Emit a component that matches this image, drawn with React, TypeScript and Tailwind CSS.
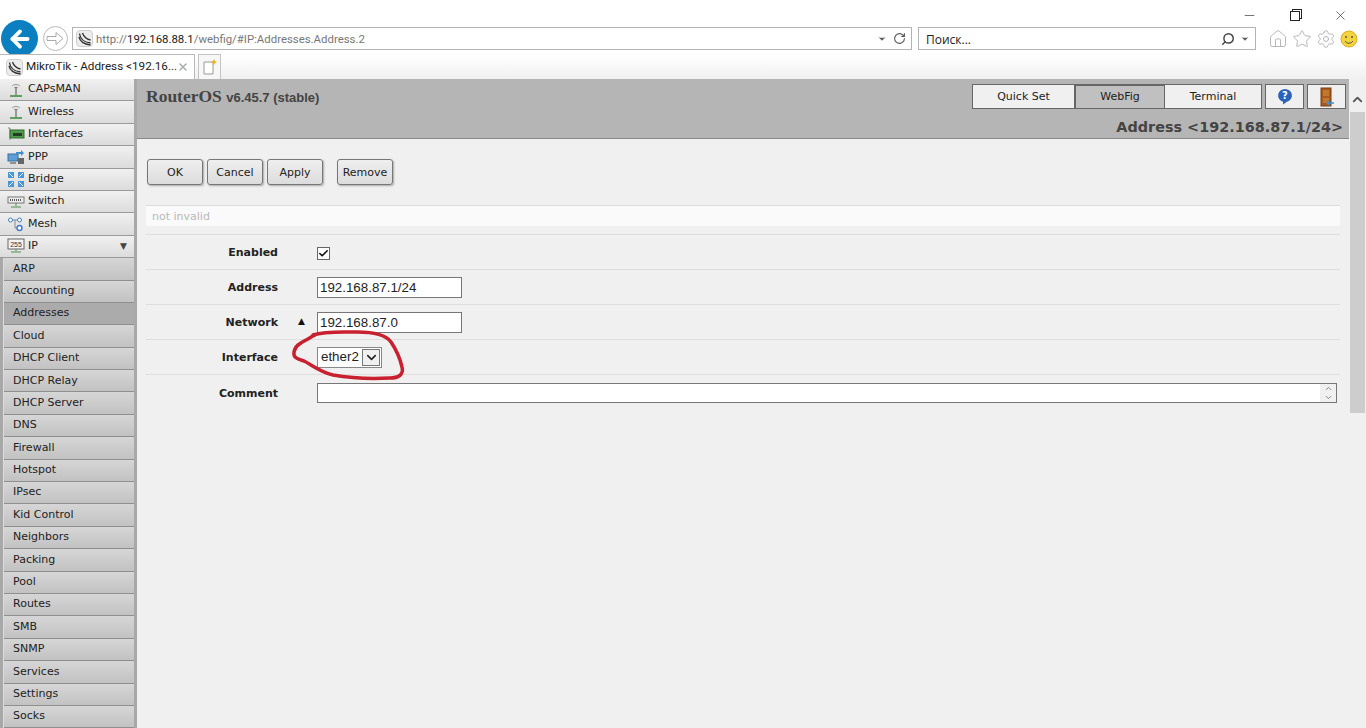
import React from 'react';
import { ArrowLeft, Home, Star, Settings, X, RotateCw, Search, ChevronDown, ChevronUp, Check, Minus } from 'lucide-react';

// last row is only just visible at the bottom edge, no label to read
const subItems = ['ARP', 'Accounting', 'Addresses', 'Cloud', 'DHCP Client', 'DHCP Relay', 'DHCP Server', 'DNS', 'Firewall', 'Hotspot', 'IPsec', 'Kid Control', 'Neighbors', 'Packing', 'Pool', 'Routes', 'SMB', 'SNMP', 'Services', 'Settings', 'Socks', ''];

// MikroTik favicon
const Logo = () => (
  <svg width="17" height="17" viewBox="0 0 17 17" className="shrink-0">
    <rect x="0.5" y="0.5" width="16" height="16" rx="3.5" fill="#ececec" stroke="#cfcfcf" />
    <path d="M3.500 3.500c.5 5 3.500 8.500 11 9.500M3 7c1 4.500 4 7 11.500 8M6.500 3c1 3 3.500 6 8 7" fill="none" stroke="#333" strokeWidth="1.3" />
  </svg>
);

const Antenna = () => (
  <svg width="18" height="16" viewBox="0 0 18 16">
    <path d="M5 4c2-2 6-2 8 0M7 6c1-1 3-1 4 0" fill="none" stroke="#999" />
    <path d="M9 5v8" stroke="#666" strokeWidth="1.2" />
    <path d="M3 14h12" stroke="#3f8f3f" strokeWidth="1.6" />
  </svg>
);

const InterfacesIcon = () => (
  <svg width="18" height="16" viewBox="0 0 18 16">
    <path d="M1 2h2v12" fill="none" stroke="#888" />
    <rect x="3" y="4" width="14" height="8" fill="#4f9a4f" stroke="#2f6f2f" />
    <path d="M6 7h9v3H6z" fill="#1f3f1f" />
  </svg>
);

const PppIcon = () => (
  <svg width="18" height="16" viewBox="0 0 18 16">
    <rect x="1" y="5" width="10" height="7" fill="#5c9fd8" stroke="#3c6f9c" />
    <path d="M3 14h6" stroke="#777" strokeWidth="1.5" />
    <rect x="11" y="9" width="6" height="6" fill="#666" />
    <path d="M9 3h5V1l3 3-3 3V5H9z" fill="#3f8fd0" />
  </svg>
);

const BridgeIcon = () => (
  <svg width="18" height="17" viewBox="0 0 18 17">
    <path d="M1 1h6v6H1zM11 1h6v6h-6zM1 10h6v6H1zM11 10h6v6h-6z" fill="#4a97d6" />
    <path d="M2 2l4 4M16 2l-4 4M2 15l4-4M16 15l-4-4" stroke="#fff" />
  </svg>
);

const SwitchIcon = () => (
  <svg width="18" height="16" viewBox="0 0 18 16">
    <rect x="1" y="3" width="16" height="6" fill="#eee" stroke="#777" />
    <path d="M3 6h12" stroke="#555" strokeDasharray="1 1" strokeWidth="2" />
    <path d="M9 9v3M4 13h10" stroke="#4f8f4f" />
  </svg>
);

const MeshIcon = () => (
  <svg width="18" height="16" viewBox="0 0 18 16">
    <path d="M4 4h6M8 4v8h3" fill="none" stroke="#888" />
    <circle cx="3.500" cy="4" r="2" fill="#fff" stroke="#3f7fc0" />
    <circle cx="12.500" cy="4" r="2" fill="#fff" stroke="#3f7fc0" />
    <circle cx="12.500" cy="12" r="2.500" fill="#fff" stroke="#3f7fc0" strokeWidth="1.4" />
  </svg>
);

const IpIcon = () => (
  <svg width="18" height="16" viewBox="0 0 18 16">
    <rect x="1" y="1" width="16" height="10" fill="#f4f4f4" stroke="#666" />
    <text x="9" y="9" textAnchor="middle" fontSize="7" fill="#333" fontFamily="Liberation Sans, sans-serif">255</text>
    <path d="M9 11v2M4 14h10" stroke="#4f8f4f" />
  </svg>
);

const topItems: [string, React.ReactNode][] = [
  ['CAPsMAN', <Antenna />],
  ['Wireless', <Antenna />],
  ['Interfaces', <InterfacesIcon />],
  ['PPP', <PppIcon />],
  ['Bridge', <BridgeIcon />],
  ['Switch', <SwitchIcon />],
  ['Mesh', <MeshIcon />],
];

const FormButton = ({ label, className = '' }: { label: string; className?: string }) => (
  <button className={`h-[26px] w-14 rounded-[3px] border border-[#777] bg-gradient-to-b from-[#efefef] to-[#dcdcdc] pt-[2px] text-[11px] text-[#222] shadow-[1px_1px_2px_rgba(0,0,0,0.3)] ${className}`}>
    {label}
  </button>
);

const Row = ({ label, children }: { label: string; children: React.ReactNode }) => (
  <div className="flex h-[35px] items-center border-b border-[#dedede]">
    <div className="w-[132px] pt-[3px] text-right text-[11px] font-bold text-[#222]">{label}</div>
    <div className="ml-[39px] flex flex-1 items-center">{children}</div>
  </div>
);

const fieldText = "font-['Liberation_Sans',sans-serif] text-[13.33px] text-[#222]";

export default function App() {
  return (
    <div className="relative flex h-[728px] flex-col overflow-hidden bg-white font-['DejaVu_Sans',sans-serif]">
      {/* IE window chrome */}
      <div className="h-[79px] shrink-0 bg-gradient-to-b from-white from-70% to-[#f0f0f0] font-['Roboto',sans-serif]">
        <div className="flex h-[27px] items-center justify-end gap-[33px] pr-[18px] pt-1 text-[#222]">
          <Minus size={15} strokeWidth={1} />
          <div className="h-[10px] w-[10px] border border-[#222] bg-white shadow-[2px_-2px_0_-1px_#fff,2px_-2px_0_0_#222]" />
          <X size={15} strokeWidth={1} />
        </div>
        <div className="flex h-[23px] items-center">
          <div className="-my-2 ml-[1px] flex h-[37px] w-[37px] shrink-0 items-center justify-center rounded-full bg-[#0b7fc0] text-white">
            <ArrowLeft size={26} strokeWidth={3.5} />
          </div>
          <div className="ml-[5px] flex h-[25px] w-[25px] shrink-0 items-center justify-center rounded-full border border-[#bbb]">
            <svg width="19" height="15" viewBox="0 0 19 15">
              <path d="M1 5.500h9V1.500l7 6-7 6v-4H1z" fill="none" stroke="#aaa" />
            </svg>
          </div>
          <div className="ml-[4px] flex h-[23px] w-[840px] items-center border border-[#b4b4b4] pl-[3px] pr-[5px] text-[11.4px]">
            <Logo />
            <span className="ml-[3px] flex-1 whitespace-nowrap pt-[2px] text-[#777]">
              http://<span className="text-[#222]">192.168.88.1</span>/webfig/#IP:Addresses.Address.2
            </span>
            <ChevronDown size={10} className="text-[#555]" fill="#555" />
            <RotateCw size={13} className="ml-[6px] text-[#555]" />
          </div>
          <div className="ml-[6px] flex h-[23px] w-[338px] items-center border border-[#b4b4b4] pl-[7px] pr-[5px] font-['Open_Sans',sans-serif] text-[12px] text-[#222]">
            <span className="flex-1 pt-[2px]">Поиск...</span>
            <Search size={14} className="-scale-x-100 text-[#444]" strokeWidth={2.5} />
            <ChevronDown size={10} className="ml-[5px] text-[#555]" fill="#555" />
          </div>
          <div className="ml-[12px] flex items-center gap-[4px] text-[#aaa]">
            <Home size={20} strokeWidth={1} />
            <Star size={20} strokeWidth={1} />
            <Settings size={20} strokeWidth={1} />
            <svg width="18" height="18" viewBox="0 0 18 18">
              <circle cx="9" cy="9" r="8" fill="#f4d33c" stroke="#d8b020" />
              <circle cx="6" cy="7" r="1" fill="#555" />
              <circle cx="12" cy="7" r="1" fill="#555" />
              <path d="M5 11c2 3 6 3 8 0" fill="none" stroke="#555" />
            </svg>
          </div>
        </div>
        <div className="mt-1 flex h-[25px] items-start">
          <div className="flex h-[25px] w-[195px] items-center border-r border-t border-[#b9b9b9] bg-white pl-[6px] pr-[5px] text-[11.7px] text-[#222]">
            <Logo />
            <span className="ml-[3px] flex-1 whitespace-nowrap">MikroTik - Address &lt;192.16...</span>
            <X size={12} strokeWidth={3} className="shrink-0 text-[#aaa]" />
          </div>
          <div className="ml-[3px] flex h-[25px] w-[23px] items-center justify-center border-x border-t border-[#c4c4c4] bg-[#f7f7f7]">
            <svg width="16" height="18" viewBox="0 0 16 18">
              <path d="M2 4h9v12H2z" fill="#fff" stroke="#999" />
              <path d="M12 1l1 2 2 1-2 1-1 2-1-2-2-1 2-1z" fill="#f0b020" />
            </svg>
          </div>
        </div>
      </div>

      <div className="flex min-h-0 flex-1">
        {/* Menu */}
        <div className="w-[137px] shrink-0 border-r-[3px] border-[#a8a8a8] bg-[#dcdcdc] text-[11px] text-[#222]">
          {topItems.map(([label, icon]) => (
            <div key={label} className="flex h-[22.4px] items-center border-b border-[#999] bg-gradient-to-b from-[#f0f0f0] to-[#dcdcdc] pl-[7px]">
              <span className="flex w-[21px] justify-start">{icon}</span>
              {label}
            </div>
          ))}
          <div className="flex h-[22.4px] items-center border-b border-[#999] bg-gradient-to-b from-[#f0f0f0] to-[#dcdcdc] pl-[7px]">
            <span className="flex w-[21px]"><IpIcon /></span>
            <span className="flex-1">IP</span>
            <span className="mr-[7px] text-[9px] text-[#444]">▼</span>
          </div>
          <div className="border-l-[3px] border-[#a8a8a8] pl-px">
            {subItems.map(item => (
              <div key={item} className={`flex h-[22.4px] items-center border-b border-[#8f8f8f] pl-[9px] ${item === 'Addresses' ? 'bg-[#ababab]' : 'bg-gradient-to-b from-[#d6d6d6] to-[#c2c2c2]'}`}>
                {item}
              </div>
            ))}
          </div>
        </div>

        {/* Page */}
        <div className="flex min-w-0 flex-1 flex-col bg-[#f0f0f0]">
          <div className="h-[60px] shrink-0 border-b border-[#888] bg-[#b5b5b5] pl-[9px] pr-[3px]">
            <div className="flex h-[37px] items-start justify-between pt-[5px]">
              <div className="pt-[2px] font-['Liberation_Serif',serif] text-[17.5px] font-bold leading-[20px] text-[#444]">
                RouterOS <span className="font-['Liberation_Sans',sans-serif] text-[13px]">v6.45.7 (stable)</span>
              </div>
              <div className="flex items-center text-[11px] text-[#222]">
                <div className="flex h-[25px] w-[103px] items-center justify-center border border-[#666] bg-[#f0f0f0] pt-px">Quick Set</div>
                <div className="-ml-px flex h-[25px] w-[91px] items-center justify-center border border-[#666] border-l-2 border-t-2 bg-[#c0c0c0] pt-px">WebFig</div>
                <div className="-ml-px flex h-[25px] w-[98px] items-center justify-center border border-[#666] bg-[#f0f0f0] pt-px">Terminal</div>
                <div className="ml-[3px] flex h-[25px] w-[39px] items-center justify-center border border-[#666] bg-[#f0f0f0]">
                  <svg width="16" height="17" viewBox="0 0 16 17">
                    <path d="M8 1a7 6.500 0 0 1 2 12.700L6 16.500V13.700A7 6.500 0 0 1 8 1z" fill="#2a63b8" />
                    <text x="8" y="11" textAnchor="middle" fontSize="10" fontWeight="700" fill="#fff" fontFamily="DejaVu Sans, sans-serif">?</text>
                  </svg>
                </div>
                <div className="ml-[3px] flex h-[25px] w-[39px] items-center justify-center border border-[#666] bg-[#f0f0f0]">
                  <svg width="16" height="20" viewBox="0 0 16 20">
                    <rect x="2" y="1" width="10" height="18" fill="#a85a20" stroke="#7a3f10" />
                    <path d="M4 3h6v6H4zM4 11h6v5H4z" fill="#c07830" />
                    <path d="M8 16h7M8 16l2-2M8 16l2 2" stroke="#3f8fd0" strokeWidth="1.6" fill="none" />
                  </svg>
                </div>
              </div>
            </div>
            <div className="pr-[3px] text-right text-[14.4px] font-bold leading-[22px] text-[#444]">Address &lt;192.168.87.1/24&gt;</div>
          </div>

          <div className="min-h-0 flex-1 pl-[9px] pr-[9px]">
            <div className="flex pl-px pt-5">
              <FormButton label="OK" />
              <FormButton label="Cancel" className="ml-1" />
              <FormButton label="Apply" className="ml-1" />
              <FormButton label="Remove" className="ml-[14px]" />
            </div>
            <div className="mt-5 flex h-[21px] items-center border-t border-[#dcdcdc] bg-[#fafafa] pl-[6px] pt-[2px] text-[11px] text-[#b8b8b8]">not invalid</div>
            <div className="mt-2 border-t border-[#dedede]">
              <Row label="Enabled">
                <div className="mt-[2px] flex h-[13px] w-[13px] items-center justify-center border border-[#666] bg-white">
                  <Check size={11} strokeWidth={3.5} className="text-[#111]" />
                </div>
              </Row>
              <Row label="Address">
                <input readOnly value="192.168.87.1/24" className={`h-[21px] w-[145px] border border-[#777] bg-white px-[2px] ${fieldText}`} />
              </Row>
              <Row label="Network">
                <div className="relative">
                  <span className="absolute -left-[19px] top-[5px] text-[9px] text-[#111]">▲</span>
                  <input readOnly value="192.168.87.0" className={`h-[21px] w-[145px] border border-[#777] bg-white px-[2px] ${fieldText}`} />
                </div>
              </Row>
              <Row label="Interface">
                <div className={`flex h-[21px] w-[65px] items-center border border-[#888] bg-white pl-[3px] ${fieldText}`}>
                  <span className="flex-1">ether2</span>
                  <span className="mr-px flex h-[17px] w-[18px] items-center justify-center border border-[#777] bg-[#f0f0f0]">
                    <ChevronDown size={15} strokeWidth={2.5} className="text-[#222]" />
                  </span>
                </div>
              </Row>
              <div className="flex h-[35px] items-center">
                <div className="w-[132px] pt-[3px] text-right text-[11px] font-bold text-[#222]">Comment</div>
                <div className="ml-[39px] flex h-[20px] w-[1020px] items-center justify-end border border-[#777] bg-white">
                  <div className="flex h-full w-[16px] flex-col items-center justify-center bg-[#f0f0f0] text-[#666]">
                    <ChevronUp size={9} />
                    <ChevronDown size={9} />
                  </div>
                </div>
              </div>
            </div>
          </div>
        </div>

        {/* Scrollbar */}
        <div className="flex w-[17px] shrink-0 flex-col bg-[#f0f0f0]">
          <div className="flex h-[33px] items-end justify-center pb-[5px] text-[#555]">
            <ChevronUp size={15} strokeWidth={3} />
          </div>
          <div className="ml-px h-[301px] w-[15px] bg-[#cdcdcd]" />
        </div>
      </div>

      {/* red marker scribble around the interface field */}
      <svg className="pointer-events-none absolute left-[288px] top-[326px]" width="122" height="58" viewBox="288 326 122 58">
        <path d="M313 335C325 331 340 332 357 332C373 332 386 335 391 342C397 351 400 358 402 367C404 375 398 378 390 378C372 379 350 378 333 375C320 372 312 365 304 361C298 359 293 358 294 352C295 346 300 343 306 340C310 338 312 336 315 335" fill="none" stroke="#c8202f" strokeWidth="3.5" strokeLinecap="round" strokeLinejoin="round" />
      </svg>
    </div>
  );
}
